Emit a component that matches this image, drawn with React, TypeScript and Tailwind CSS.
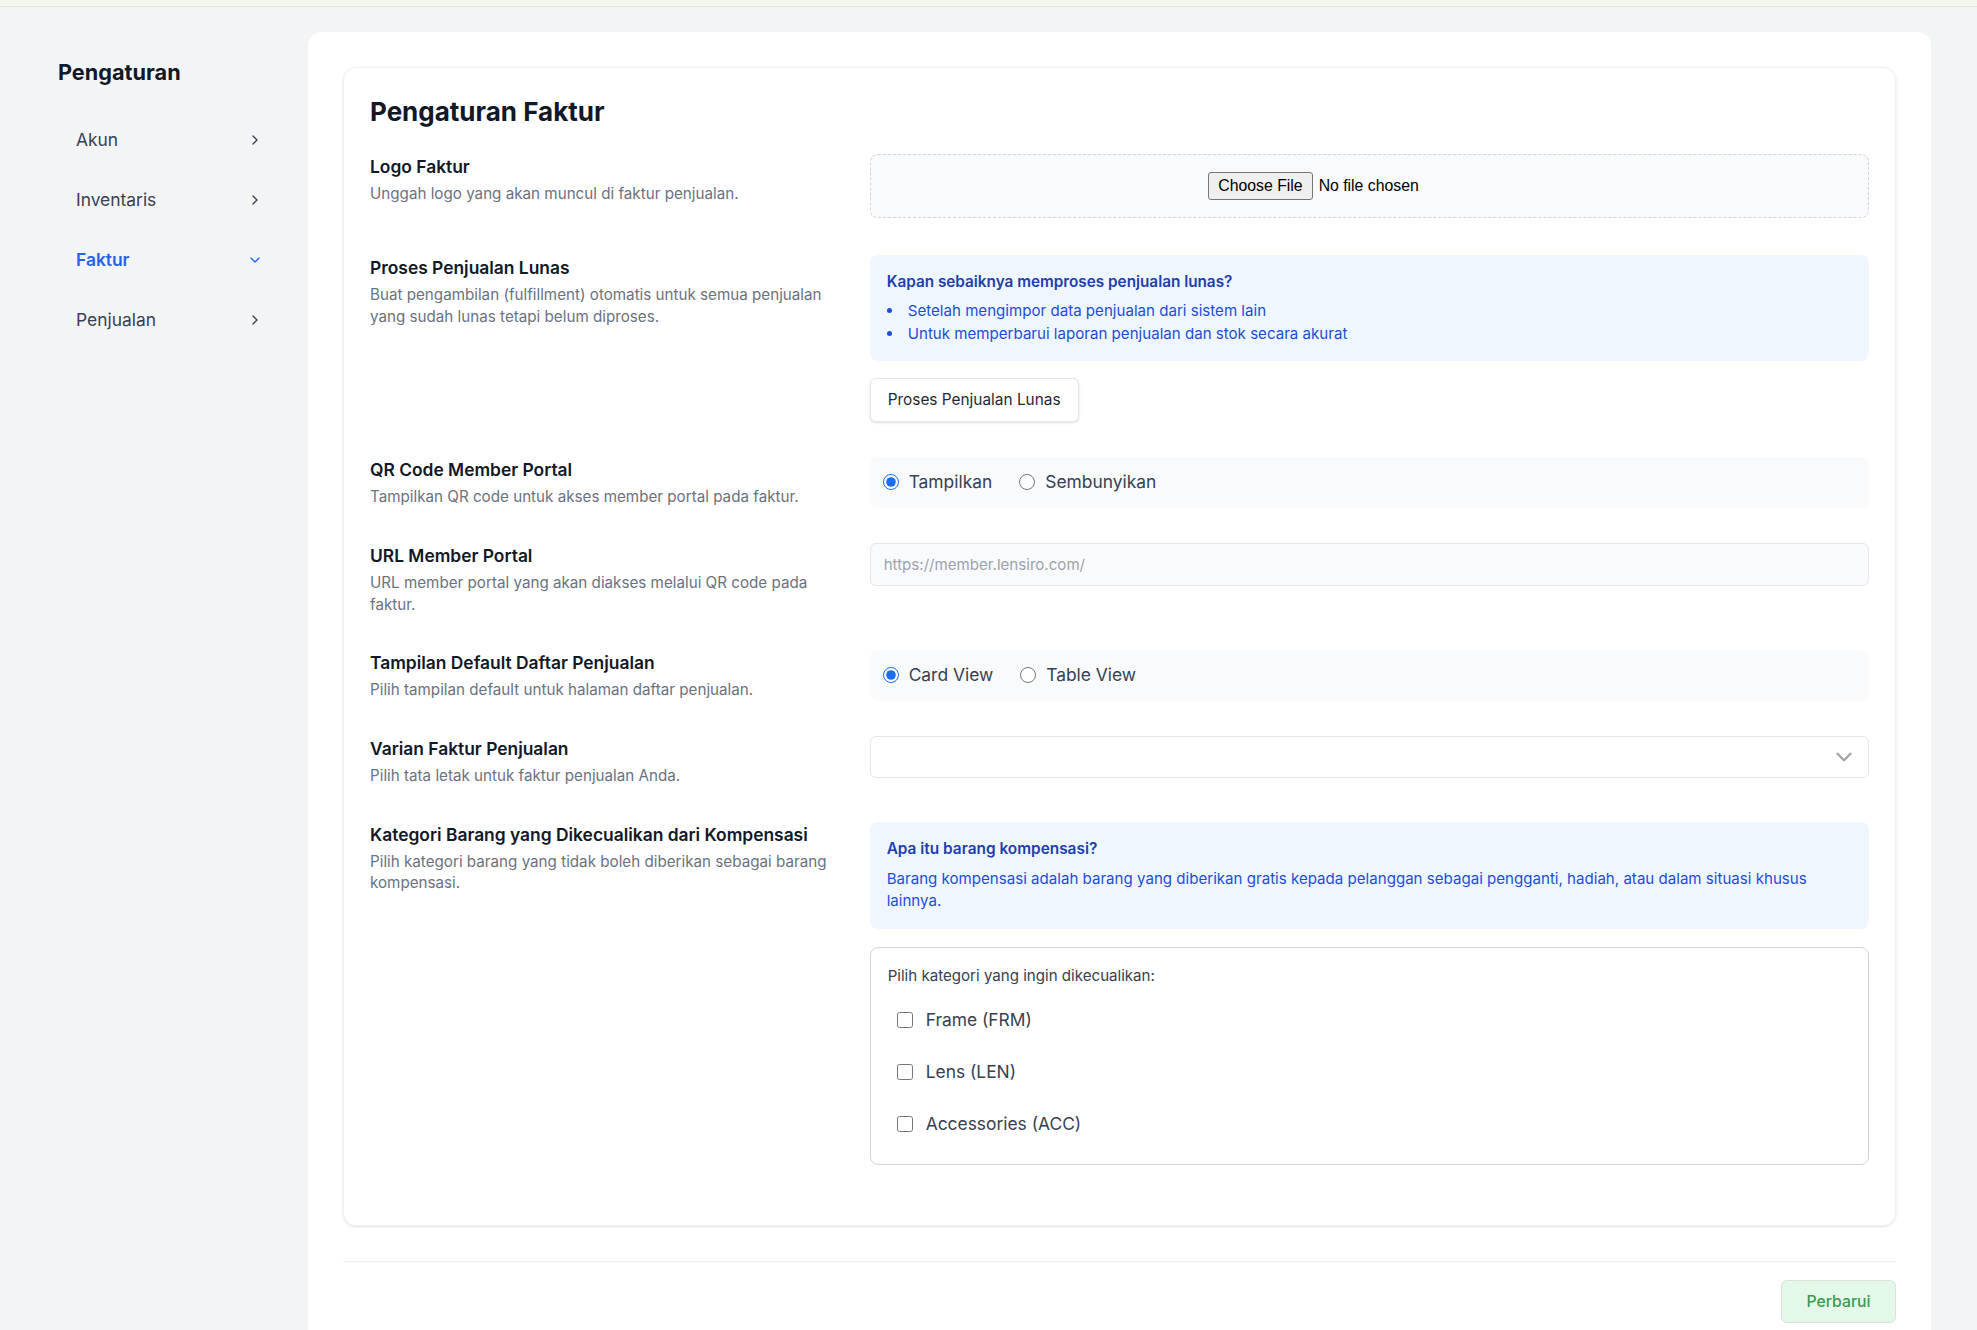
import { ChevronDown, ChevronRight } from "lucide-react";

const navItems = [
  { label: "Akun", active: false },
  { label: "Inventaris", active: false },
  { label: "Faktur", active: true },
  { label: "Penjualan", active: false },
];

const categories = ["Frame (FRM)", "Lens (LEN)", "Accessories (ACC)"];

const Field = ({
  title,
  description,
  className = "",
  children,
}: {
  title: string;
  description: string;
  className?: string;
  children: React.ReactNode;
}) => (
  <div className={`flex ${className}`}>
    <div className="w-1/3 shrink-0 pr-[36px]">
      <h3 className="text-[17.4px] font-semibold leading-[26px] text-[#111827]">{title}</h3>
      <p className="mt-[3px] text-[15.2px] leading-[21.5px] text-[#6b7280]">{description}</p>
    </div>
    <div className="flex-1">{children}</div>
  </div>
);

const RadioGroup = ({ name, options }: { name: string; options: string[] }) => (
  <div className="flex h-[51px] items-center gap-[27px] rounded-lg bg-[#f9fafb] px-[13px]">
    {options.map((option, index) => (
      <label key={option} className="flex items-center gap-[10px] text-[17.4px] text-[#374151]">
        <input
          type="radio"
          name={name}
          defaultChecked={index === 0}
          className="h-4 w-4 accent-[#1a6ef5]"
        />
        {option}
      </label>
    ))}
  </div>
);

const App = () => {
  return (
    <div className="min-h-screen bg-[#f3f4f6] font-['Inter',sans-serif]">
      <div className="h-[7px] border-b border-[#e1e9d6] bg-[#f4f8ee]" />
      <div className="flex">
        <aside className="w-[308px] shrink-0 pl-[58px] pr-[27px] pt-[50px]">
          <h2 className="text-[21.7px] font-bold leading-[30px] text-[#111827]">Pengaturan</h2>
          <nav className="mt-[23px]">
            {navItems.map((item) => (
              <div
                key={item.label}
                className={`flex h-[60px] items-center justify-between px-[18px] text-[17.4px] ${
                  item.active ? "font-semibold text-[#2563eb]" : "text-[#374151]"
                }`}
              >
                <span>{item.label}</span>
                {item.active ? <ChevronDown size={16} /> : <ChevronRight size={16} />}
              </div>
            ))}
          </nav>
        </aside>

        <main className="mr-[46px] mt-[25px] flex-1 rounded-t-[14px] bg-white p-[35px]">
          <div className="rounded-[13px] border border-[#eef0f2] px-[26px] pb-[60px] pt-[24px] shadow-sm">
            <h1 className="text-[26px] font-bold leading-[40px] text-[#111827]">Pengaturan Faktur</h1>

            <div className="mt-[22px] flex flex-col gap-[35px]">
              <Field
                className="mb-[2px]"
                title="Logo Faktur"
                description="Unggah logo yang akan muncul di faktur penjualan."
              >
                <div className="flex h-[64px] items-center justify-center rounded-lg border border-dashed border-[#d1d5db] bg-[#f9fafb]">
                  <div className="flex w-[322px] items-center gap-[6px] font-['Liberation_Sans',Arial,sans-serif] text-[15.8px] text-black">
                    <span className="flex h-[28px] items-center rounded-[3px] border border-[#767676] bg-[#efefef] px-[9px]">
                      Choose File
                    </span>
                    <span>No file chosen</span>
                  </div>
                </div>
              </Field>

              <Field
                title="Proses Penjualan Lunas"
                description="Buat pengambilan (fulfillment) otomatis untuk semua penjualan yang sudah lunas tetapi belum diproses."
              >
                <div className="rounded-lg bg-[#eff6ff] px-[17px] py-[16px]">
                  <div className="text-[15.3px] font-semibold leading-[22px] text-[#1e40af]">
                    Kapan sebaiknya memproses penjualan lunas?
                  </div>
                  <ul className="mt-[7px] list-inside list-disc text-[15.1px] leading-[22.5px] text-[#1d4ed8]">
                    <li>Setelah mengimpor data penjualan dari sistem lain</li>
                    <li>Untuk memperbarui laporan penjualan dan stok secara akurat</li>
                  </ul>
                </div>
                <button className="mt-[17px] h-[44px] rounded-md border border-[#e5e7eb] bg-white px-[17px] text-[15.4px] text-[#1f2937] shadow-sm">
                  Proses Penjualan Lunas
                </button>
              </Field>

              <Field
                title="QR Code Member Portal"
                description="Tampilkan QR code untuk akses member portal pada faktur."
              >
                <RadioGroup name="qr" options={["Tampilkan", "Sembunyikan"]} />
              </Field>

              <Field
                title="URL Member Portal"
                description="URL member portal yang akan diakses melalui QR code pada faktur."
              >
                <input
                  type="text"
                  placeholder="https://member.lensiro.com/"
                  className="h-[43px] w-full rounded-md border border-[#e5e7eb] bg-[#f9fafb] px-[13px] text-[15.1px] text-[#111827] outline-none placeholder:text-[#9ca3af]"
                />
              </Field>

              <Field
                title="Tampilan Default Daftar Penjualan"
                description="Pilih tampilan default untuk halaman daftar penjualan."
              >
                <RadioGroup name="view" options={["Card View", "Table View"]} />
              </Field>

              <Field title="Varian Faktur Penjualan" description="Pilih tata letak untuk faktur penjualan Anda.">
                <div className="relative">
                  <select className="h-[42px] w-full appearance-none rounded-md border border-[#e5e7eb] bg-white px-[13px] text-[15.1px] outline-none">
                    <option value="" />
                  </select>
                  <ChevronDown
                    size={26}
                    strokeWidth={2.2}
                    className="pointer-events-none absolute right-[12px] top-[8px] text-[#a3a3a3]"
                  />
                </div>
              </Field>

              <Field
                title="Kategori Barang yang Dikecualikan dari Kompensasi"
                description="Pilih kategori barang yang tidak boleh diberikan sebagai barang kompensasi."
              >
                <div className="rounded-lg bg-[#eff6ff] px-[17px] py-[16px]">
                  <div className="text-[15.4px] font-semibold leading-[22px] text-[#1e40af]">
                    Apa itu barang kompensasi?
                  </div>
                  <p className="mt-[8px] text-[15.1px] leading-[22.5px] text-[#1d4ed8]">
                    Barang kompensasi adalah barang yang diberikan gratis kepada pelanggan sebagai pengganti, hadiah,
                    atau dalam situasi khusus lainnya.
                  </p>
                </div>
                <div className="mt-[18px] rounded-lg border border-[#d1d5db] px-[17px] pb-[14px] pt-[17px]">
                  <div className="text-[15.1px] leading-[21.5px] text-[#374151]">Pilih kategori yang ingin dikecualikan:</div>
                  <div className="mt-[8px]">
                    {categories.map((category) => (
                      <label key={category} className="flex h-[52px] items-center gap-[13px] pl-[9px] text-[17.4px] text-[#374151]">
                        <input type="checkbox" className="h-4 w-4 accent-[#1a6ef5]" />
                        {category}
                      </label>
                    ))}
                  </div>
                </div>
              </Field>
            </div>
          </div>

          <div className="mt-[35px] flex justify-end border-t border-[#ebedf0] pt-[18px]">
            <button className="h-[43px] w-[115px] rounded-md border border-[#d9e3dc] bg-[#e4f8e9] text-[15.75px] font-medium text-[#3d9a4f]">
              Perbarui
            </button>
          </div>
        </main>
      </div>
    </div>
  );
};

export default App;
